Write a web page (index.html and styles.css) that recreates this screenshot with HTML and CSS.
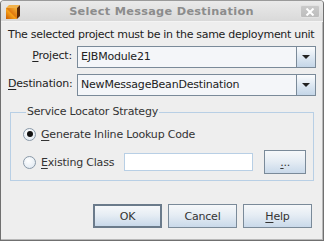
FILE: index.html
```html
<!DOCTYPE html>
<html lang="en">
<head>
    <meta charset="UTF-8">
    <title>Select Message Destination</title>
    <link rel="stylesheet" href="styles.css">
</head>
<body>
<div class="window">
    <div class="titlebar">
        <svg class="app-icon" width="16" height="16" viewBox="0 0 16 16">
            <defs>
                <linearGradient id="face" x1="0" y1="1" x2="1" y2="0">
                    <stop offset="0" stop-color="#c85a00"/>
                    <stop offset="0.45" stop-color="#f7a21a"/>
                    <stop offset="0.55" stop-color="#e07a10"/>
                    <stop offset="1" stop-color="#f6b43a"/>
                </linearGradient>
            </defs>
            <polygon points="1,4 4,1 15,1 12,4" fill="#f2b24a"/>
            <polygon points="12,4 15,1 15,12 12,15" fill="#5a2a06"/>
            <rect x="1" y="4" width="11" height="11" fill="url(#face)"/>
        </svg>
        <div class="title">Select Message Destination</div>
        <div class="close-btn">
            <svg width="10" height="8" viewBox="0 0 10 8">
                <path d="M1.5 0.5 L8.5 7.5 M8.5 0.5 L1.5 7.5" stroke="#fff" stroke-width="2"/>
            </svg>
        </div>
    </div>

    <div class="content">
        <p class="intro">The selected project must be in the same deployment unit</p>

        <div class="form-grid">
            <label class="field-label"><u>P</u>roject:</label>
            <div class="combo">
                <span class="combo-value">EJBModule21</span>
                <span class="combo-arrow"></span>
            </div>
            <label class="field-label"><u>D</u>estination:</label>
            <div class="combo">
                <span class="combo-value">NewMessageBeanDestination</span>
                <span class="combo-arrow"></span>
            </div>
        </div>

        <fieldset class="group">
            <legend>Service Locator Strategy</legend>
            <div class="radio-row">
                <span class="radio checked"></span>
                <span class="radio-text"><u>G</u>enerate Inline Lookup Code</span>
            </div>
            <div class="radio-row">
                <span class="radio"></span>
                <span class="radio-text"><u>E</u>xisting Class</span>
                <span class="text-input"></span>
                <span class="btn small-btn"><u>.</u>..</span>
            </div>
        </fieldset>
    </div>

    <div class="footer">
        <span class="btn default">OK</span>
        <span class="btn">Cancel</span>
        <span class="btn"><u>H</u>elp</span>
    </div>
</div>
</body>
</html>
```

FILE: styles.css
```css
* {
    margin: 0;
    padding: 0;
    box-sizing: border-box;
}

body {
    width: 324px;
    height: 241px;
    background: #ffffff;
    font-family: "DejaVu Sans", sans-serif;
    font-size: 11px;
    letter-spacing: -0.2px;
    color: #333333;
    white-space: nowrap;
}

u {
    text-decoration: underline;
    text-underline-offset: 2px;
}

.window {
    width: 324px;
    height: 241px;
    border: 1px solid #707070;
    border-top-color: #9a9a9a;
    border-radius: 4px 4px 0 0;
    background: #eeeeee;
    display: flex;
    flex-direction: column;
    box-shadow: inset -1px -1px 0 #b8b8b8;
}

.titlebar {
    height: 21px;
    display: flex;
    align-items: center;
    padding: 0 3px 0 4px;
    background: linear-gradient(#eaeaea, #d9d9d9);
    border-bottom: 1px solid #f4f4f4;
    border-radius: 3px 3px 0 0;
}

.app-icon {
    flex: none;
    margin-top: 1px;
}

.title {
    flex: 1;
    text-align: center;
    font-weight: bold;
    font-size: 11.3px;
    letter-spacing: 0.3px;
    color: #8c8c8c;
    padding-left: 2px;
}

.close-btn {
    width: 20px;
    height: 13px;
    margin-top: 1px;
    border: 1px solid #e2e2e2;
    border-radius: 2px;
    background: linear-gradient(#c9c9c9, #bdbdbd);
    display: flex;
    align-items: center;
    justify-content: center;
}

.content {
    padding: 6px 7px 0 7px;
}

.intro {
    line-height: 14px;
    letter-spacing: -0.3px;
    color: #222222;
}

.form-grid {
    display: grid;
    grid-template-columns: 64px 1fr;
    column-gap: 5px;
    row-gap: 6px;
    margin-top: 4px;
}

.field-label {
    text-align: right;
    align-self: start;
    padding-top: 3px;
    color: #222222;
}

.combo {
    height: 22px;
    display: flex;
    border: 1px solid #7a8a99;
    background: #f4f6f9;
}

.combo-value {
    flex: 1;
    padding: 3px 0 0 3px;
    color: #222222;
}

.combo-arrow {
    width: 19px;
    border-left: 1px solid #7a8a99;
    background: linear-gradient(#fbfcfd, #dbe6f1 55%, #c4d6e8);
    position: relative;
}

.combo-arrow::after {
    content: "";
    position: absolute;
    left: 5px;
    top: 8px;
    border-left: 4px solid transparent;
    border-right: 4px solid transparent;
    border-top: 4px solid #222222;
}

.group {
    margin: 9px 2px 0 2px;
    border: 1px solid #b8cfe5;
    padding: 3px 7px 6px 12px;
}

.group legend {
    margin-left: 3px;
    padding: 0 1px;
    line-height: 14px;
    color: #333333;
}

.radio-row {
    height: 24px;
    display: flex;
    align-items: center;
    margin-bottom: 4px;
}

.radio-row:last-child {
    margin-bottom: 0;
}

.radio {
    width: 13px;
    height: 13px;
    border: 1px solid #8a99a8;
    border-radius: 50%;
    background: radial-gradient(circle at 40% 35%, #ffffff, #dbe5ef);
    position: relative;
    flex: none;
}

.radio.checked::after {
    content: "";
    position: absolute;
    left: 2.5px;
    top: 2.5px;
    width: 6px;
    height: 6px;
    border-radius: 50%;
    background: #111111;
}

.radio-text {
    flex: none;
    margin-left: 5px;
    color: #333333;
}

.text-input {
    flex: none;
    width: 129px;
    height: 18px;
    margin-left: 10px;
    border: 1px solid #b8cfe5;
    background: #ffffff;
}

.btn {
    display: flex;
    align-items: center;
    justify-content: center;
    height: 24px;
    border: 1px solid #7a8a99;
    background: linear-gradient(#f6f8fa, #e6edf4 45%, #c9d9ea);
    color: #333333;
}

.small-btn {
    flex: none;
    width: 42px;
    margin-left: 11px;
}

.footer {
    margin-top: auto;
    display: flex;
    justify-content: flex-end;
    gap: 6px;
    padding: 0 11px 12px 0;
}

.footer .btn {
    width: 69px;
}

.footer .btn.default {
    border: 2px solid #6b7b8b;
}
```
